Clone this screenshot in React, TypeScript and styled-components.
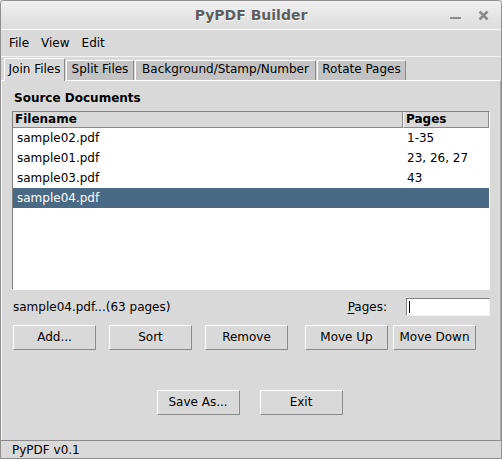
import React from "react";
import styled, { createGlobalStyle } from "styled-components";

const GlobalStyle = createGlobalStyle`
    html, body {
        margin: 0;
        padding: 0;
        background: #d9d9d9;
    }
    * {
        box-sizing: border-box;
    }
`;

const Window = styled.div`
    width: 502px;
    height: 459px;
    display: flex;
    flex-direction: column;
    border: 1px solid #8e8e8e;
    border-radius: 4px 4px 0 0;
    background-color: #d9d9d9;
    font-family: "DejaVu Sans", "Liberation Sans", sans-serif;
    font-size: 12px;
    color: #000;
    overflow: hidden;
`;

const TitleBar = styled.div`
    position: relative;
    height: 28px;
    flex: none;
    display: flex;
    align-items: center;
    justify-content: center;
    background: linear-gradient(#f0f0f0, #dcdcdc);
`;

const Title = styled.div`
    font-family: "DejaVu Sans", sans-serif;
    font-weight: bold;
    font-size: 14px;
    color: #5e5e5e;
    text-shadow: 0 1px 0 #ffffff;
`;

const Controls = styled.div`
    position: absolute;
    right: 12px;
    top: 0;
    height: 28px;
    display: flex;
    align-items: center;
    gap: 17px;
`;

const MenuBar = styled.div`
    height: 28px;
    flex: none;
    display: flex;
    align-items: center;
    gap: 12px;
    padding-left: 8px;
    border-top: 1px solid #ffffff;
    border-bottom: 1px solid #f4f4f4;
`;

const MenuItem = styled.span`
    line-height: 16px;
`;

const TabStrip = styled.div`
    height: 23px;
    flex: none;
    display: flex;
    align-items: flex-end;
    padding-left: 3px;
    gap: 1px;
`;

const Tab = styled.div<{ $active?: boolean; $w: number }>`
    position: relative;
    z-index: ${(p) => (p.$active ? 1 : 0)};
    width: ${(p) => p.$w}px;
    height: ${(p) => (p.$active ? 23 : 20)}px;
    margin-bottom: ${(p) => (p.$active ? -1 : 0)}px;
    display: flex;
    align-items: center;
    justify-content: center;
    padding-bottom: 3px;
    background-color: ${(p) => (p.$active ? "#d9d9d9" : "#c3c3c3")};
    border-top: 1px solid #ffffff;
    border-left: 1px solid #ffffff;
    border-right: 1px solid #8a8a8a;
    white-space: nowrap;
`;

const Pane = styled.div`
    height: 360px;
    flex: none;
    display: flex;
    flex-direction: column;
    padding: 9px 10px 0 10px;
    border-top: 1px solid #ffffff;
    border-left: 1px solid #f2f2f2;
    border-right: 1px solid #a8a8a8;
`;

const SectionLabel = styled.div`
    font-weight: bold;
    line-height: 16px;
    padding-left: 2px;
    margin-bottom: 5px;
`;

const List = styled.div`
    height: 179px;
    display: flex;
    flex-direction: column;
    background-color: #ffffff;
    border-top: 1px solid #828282;
    border-left: 1px solid #828282;
    border-right: 1px solid #ffffff;
    border-bottom: 1px solid #ffffff;
`;

const HeaderRow = styled.div`
    display: grid;
    grid-template-columns: 390px 86px;
    height: 16px;
    background-color: #d9d9d9;
`;

const HeaderCell = styled.div<{ $first?: boolean }>`
    font-weight: bold;
    line-height: 14px;
    padding-left: 2px;
    border-bottom: 1px solid #8a8a8a;
    border-right: 1px solid #8a8a8a;
    border-left: ${(p) => (p.$first ? "none" : "1px solid #ffffff")};
`;

const Row = styled.div<{ $selected?: boolean }>`
    display: grid;
    grid-template-columns: 390px 86px;
    height: 20px;
    align-items: center;
    background-color: ${(p) => (p.$selected ? "#4a6984" : "transparent")};
    color: ${(p) => (p.$selected ? "#ffffff" : "#000000")};
`;

const Cell = styled.div<{ $pad: number }>`
    padding-left: ${(p) => p.$pad}px;
    white-space: nowrap;
`;

const InfoRow = styled.div`
    height: 19px;
    margin-top: 7px;
    display: flex;
    align-items: center;
    padding-left: 1px;
`;

const InfoText = styled.span`
    flex: 1;
`;

const PagesLabel = styled.label`
    margin-right: 19px;
    u {
        text-decoration: underline;
        text-underline-offset: 2px;
    }
`;

const Entry = styled.div`
    width: 84px;
    height: 18px;
    position: relative;
    background-color: #ffffff;
    border-top: 1px solid #828282;
    border-left: 1px solid #828282;
    border-right: 1px solid #f4f4f4;
    border-bottom: 1px solid #f4f4f4;
`;

const Caret = styled.span`
    position: absolute;
    left: 2px;
    top: 2px;
    width: 1px;
    height: 12px;
    background-color: #000000;
`;

const ButtonGrid = styled.div`
    display: grid;
    grid-template-columns: 96px 96px 100px 88px 83px;
    margin-top: 9px;
    padding-left: 1px;
`;

const Button = styled.button`
    width: 83px;
    height: 25px;
    padding: 0 0 2px 0;
    font-family: "DejaVu Sans", sans-serif;
    font-size: 12px;
    color: #000000;
    background-color: #d9d9d9;
    border-top: 1px solid #ffffff;
    border-left: 1px solid #ffffff;
    border-right: 1px solid #8a8a8a;
    border-bottom: 1px solid #8a8a8a;
    border-radius: 0;
`;

const BottomButtons = styled.div`
    display: flex;
    justify-content: center;
    gap: 20px;
    margin-top: 40px;
    padding-right: 3px;
`;

const StatusBar = styled.div`
    flex: 1;
    display: flex;
    align-items: center;
    padding-left: 11px;
    border-top: 1px solid #8a8a8a;
`;

const files = [
    { name: "sample02.pdf", pages: "1-35" },
    { name: "sample01.pdf", pages: "23, 26, 27" },
    { name: "sample03.pdf", pages: "43" },
    { name: "sample04.pdf", pages: "", selected: true },
];

const tabs = [
    { label: "Join Files", w: 61, active: true },
    { label: "Split Files", w: 68 },
    { label: "Background/Stamp/Number", w: 181 },
    { label: "Rotate Pages", w: 89 },
];

export default function App() {
    return (
        <>
            <GlobalStyle />
            <Window>
                <TitleBar>
                    <Title>PyPDF Builder</Title>
                    <Controls>
                        <svg width="11" height="11" viewBox="0 0 11 11">
                            <rect x="0" y="7" width="11" height="2" fill="#8c8c8c" />
                        </svg>
                        <svg width="11" height="11" viewBox="0 0 11 11">
                            <path d="M1.5 1.5 L9.5 9.5 M9.5 1.5 L1.5 9.5" stroke="#8c8c8c" strokeWidth="2.6" />
                        </svg>
                    </Controls>
                </TitleBar>
                <MenuBar>
                    <MenuItem>File</MenuItem>
                    <MenuItem>View</MenuItem>
                    <MenuItem>Edit</MenuItem>
                </MenuBar>
                <TabStrip>
                    {tabs.map((t) => (
                        <Tab key={t.label} $active={t.active} $w={t.w}>{t.label}</Tab>
                    ))}
                </TabStrip>
                <Pane>
                    <SectionLabel>Source Documents</SectionLabel>
                    <List>
                        <HeaderRow>
                            <HeaderCell $first>Filename</HeaderCell>
                            <HeaderCell>Pages</HeaderCell>
                        </HeaderRow>
                        {files.map((f) => (
                            <Row key={f.name} $selected={f.selected}>
                                <Cell $pad={4}>{f.name}</Cell>
                                <Cell $pad={4}>{f.pages}</Cell>
                            </Row>
                        ))}
                    </List>
                    <InfoRow>
                        <InfoText>sample04.pdf...(63 pages)</InfoText>
                        <PagesLabel><u>P</u>ages:</PagesLabel>
                        <Entry><Caret /></Entry>
                    </InfoRow>
                    <ButtonGrid>
                        <Button>Add...</Button>
                        <Button>Sort</Button>
                        <Button>Remove</Button>
                        <Button>Move Up</Button>
                        <Button>Move Down</Button>
                    </ButtonGrid>
                    <BottomButtons>
                        <Button>Save As...</Button>
                        <Button>Exit</Button>
                    </BottomButtons>
                </Pane>
                <StatusBar>PyPDF v0.1</StatusBar>
            </Window>
        </>
    );
}
